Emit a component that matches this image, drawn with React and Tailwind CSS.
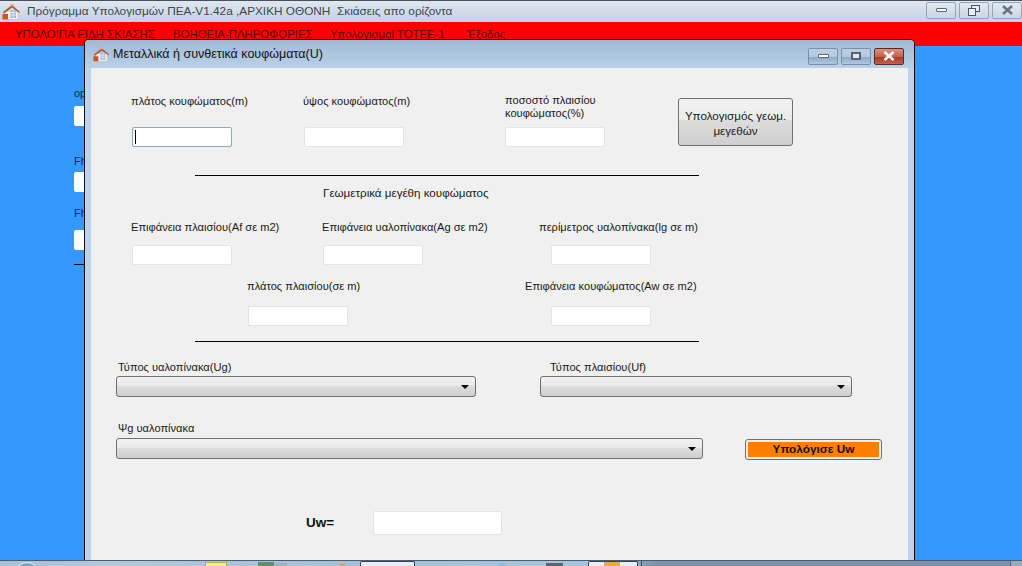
const font = { fontFamily: '"Liberation Sans", Arial, sans-serif' };

function House({ className }) {
  return (
    <svg viewBox="0 0 18 16" className={className}>
      <rect x="3" y="7" width="13" height="8.5" fill="#f6f3ec" stroke="#aeb7c2" strokeWidth="0.5" />
      <path d="M1 8 L10 1 L17.5 7.5 L17.5 9.2 L10 3.4 L2 9.4 Z" fill="#b5532d" />
      <rect x="8.5" y="0.3" width="3" height="2" fill="#e0a27c" />
      <rect x="0.5" y="10" width="5.5" height="5.5" fill="#d2521f" />
      <rect x="8.5" y="6" width="5.5" height="8" fill="#9fb9d3" />
      <path d="M8.5 8.5H14M8.5 11H14M11.2 6V14" stroke="#f4f7fa" strokeWidth="0.7" />
    </svg>
  );
}

function Field({ w = "w-[100px]", h = "h-5", ml = "", active }) {
  return (
    <div className={`${w} ${h} ${ml} shrink-0 rounded-[2px] bg-white border flex items-center ${active ? "border-[#86a9d0]" : "border-[#e2e4e6]"}`}>
      {active && <div className="ml-[2px] w-px h-[14px] bg-black" />}
    </div>
  );
}

function Combo({ w, ml = "" }) {
  return (
    <div className={`${w} ${ml} h-[21px] shrink-0 rounded-[3px] border border-[#707070] flex items-center justify-end pr-[6px] bg-[linear-gradient(#f2f2f2_0%,#ebebeb_45%,#dddddd_46%,#cfcfcf_100%)]`}>
      <div className="w-0 h-0 border-x-[4px] border-x-transparent border-t-[4px] border-t-black" />
    </div>
  );
}

function Label({ children, cell = "" }) {
  return <div className={`${cell} shrink-0 text-[11.1px] leading-[13px] text-[#1a1a1a] whitespace-nowrap`}>{children}</div>;
}

function CaptionBtn({ close, children }) {
  return (
    <div className={`w-[30px] h-[17px] rounded-[2px] border flex items-center justify-center ${close ? "border-[#5a2a25] bg-[linear-gradient(#dd8f80_0%,#c9614f_50%,#a63a28_55%,#c8604c_100%)]" : "border-[#7d8fa5] bg-[linear-gradient(#bccfe3_0%,#b4c9df_50%,#8fabc8_55%,#b0c7de_100%)]"}`}>
      {children}
    </div>
  );
}

function TopBtn({ children }) {
  return <div className="w-[30px] h-[17px] rounded-[2px] border border-[#93a5b8] bg-[linear-gradient(#e2eaf3,#c8d6e6)] flex items-center justify-center">{children}</div>;
}

export default function App() {
  return (
    <div style={font} className="relative w-[1022px] h-[566px] overflow-hidden bg-[#3399ff] flex flex-col">
      {/* main title bar */}
      <div className="h-[22px] shrink-0 border-t border-[#4a4f55] flex items-center bg-[linear-gradient(#dfe7f0,#c3d2e3)]">
        <House className="ml-[2px] w-[18px] h-[16px]" />
        <span className="ml-[7px] text-[11.8px] text-[#3c4650] whitespace-pre">Πρόγραμμα Υπολογισμών ΠΕΑ-V1.42a ,ΑΡΧΙΚΗ ΟΘΟΝΗ  Σκιάσεις απο ορίζοντα</span>
        <div className="ml-auto mb-[3px] flex gap-[3px]">
          <TopBtn><div className="w-[11px] h-[4px] border border-[#5a6571] bg-white rounded-[1px]" /></TopBtn>
          <TopBtn>
            <svg width="12" height="11" viewBox="0 0 12 11" fill="none" stroke="#4a5561"><rect x="3.5" y="0.5" width="8" height="6" fill="#e8eef5" /><rect x="0.5" y="3.5" width="7" height="7" fill="#e8eef5" /></svg>
          </TopBtn>
          <TopBtn>
            <svg width="13" height="10" viewBox="0 0 13 10"><path d="M2 1L11 9M11 1L2 9" stroke="#6b7580" strokeWidth="2.6" /></svg>
          </TopBtn>
        </div>
      </div>
      {/* menu */}
      <div className="h-6 shrink-0 bg-[#ff0000] flex items-start pt-[5px] text-[11.4px] leading-[14px] text-[#5a0000] whitespace-nowrap">
        <span className="ml-[15px] w-[158px]">ΥΠΟΛΟΙΠΑ ΕΙΔΗ ΣΚΙΑΣΗΣ</span>
        <span className="w-[157px]">ΒΟΗΘΕΙΑ-ΠΛΗΡΟΦΟΡΙΕΣ</span>
        <span className="w-[137px]">Υπολογισμοί ΤΟΤΕΕ-1</span>
        <span>Έξοδος</span>
      </div>
      {/* parent form content, mostly covered */}
      <div className="flex-1 pl-[74px] pt-[41px] text-[11px] leading-[13px] text-[#102a50]">
        <div className="h-[19px]">op</div>
        <div className="h-5 w-[60px] bg-white rounded-[2px]" />
        <div className="h-[29px] mt-[17px] pt-[12px]">Fh</div>
        <div className="h-5 w-[60px] bg-white rounded-[2px]" />
        <div className="h-[38px] pt-[15px]">Fh</div>
        <div className="h-5 w-[60px] bg-white rounded-[2px]" />
        <div className="mt-[14px] h-px w-[60px] bg-black" />
      </div>
      {/* taskbar */}
      <div className="h-[6px] shrink-0 border-t border-[#4b5d70] bg-[linear-gradient(90deg,#a9bfd2_0%,#b3c8da_10%,#a5bfd7_35%,#a8c3db_60%,#7d92a8_64%,#7d92a8_100%)] relative">
        <div className="absolute left-[14px] top-[1px] w-[26px] h-[26px] rounded-full border border-[#e8f0f8] bg-[#7ba3c4]" />
        <div className="absolute left-[205px] top-[1px] w-[22px] h-[5px] bg-[#f3e6ae] border border-b-0 border-[#c9a84a]" />
        <div className="absolute left-[258px] top-[1px] w-[16px] h-[5px] bg-[#5f8f70]" />
        <div className="absolute left-[274px] top-[2px] w-[13px] h-[4px] bg-[#9fb0bf]" />
        <div className="absolute left-[340px] top-[3px] w-[5px] h-[3px] bg-[#e0a040]" />
        <div className="absolute left-[360px] top-0 w-[55px] h-[6px] bg-[#e6edf4] border border-b-0 border-[#36465a] rounded-t-[2px]" />
        <div className="absolute left-[497px] top-[2px] w-[9px] h-[4px] rounded-t-full bg-[#7cc4e6]" />
        <div className="absolute left-[546px] top-[2px] w-[17px] h-[4px] bg-[#5a6570]" />
        <div className="absolute left-[588px] top-0 w-[50px] h-[6px] bg-[#e6edf4] border border-b-0 border-[#36465a] rounded-t-[2px]">
          <div className="ml-[15px] w-[16px] h-[4px] bg-[#f0a640]" />
        </div>
        <div className="absolute left-[641px] top-0 w-px h-[6px] bg-[#36465a]" />
        <div className="absolute left-[1010px] top-0 w-[12px] h-[6px] bg-[#9aaabb] border-l border-[#55677a]" />
      </div>
      {/* child window */}
      <div className="absolute left-[84px] top-[39px] w-[831px] h-[521px] border-x border-t border-[#111] rounded-t-[5px] bg-[#bcd3ec] flex flex-col px-[6px] shadow-[inset_0_1px_0_#fff]">
        <div className="h-[28px] shrink-0 -mx-[6px] px-[8px] flex items-center bg-[linear-gradient(#a3bad6,#b9d0e8)] rounded-t-[4px]">
          <House className="w-[16px] h-[15px]" />
          <span className="ml-[4px] text-[12.5px] text-[#111]">Μεταλλικά ή συνθετικά κουφώματα(U)</span>
          <div className="ml-auto mr-[2px] mt-[4px] flex gap-[3px]">
            <CaptionBtn><div className="w-[11px] h-[4px] border border-[#5a6571] bg-white rounded-[1px]" /></CaptionBtn>
            <CaptionBtn><div className="w-[10px] h-[8px] border-2 border-[#56626e] bg-[#dfe8f1]" /></CaptionBtn>
            <CaptionBtn close>
              <svg width="14" height="10" viewBox="0 0 14 10"><path d="M2.5 1L11.5 9M11.5 1L2.5 9" stroke="#fff" strokeWidth="2.6" /></svg>
            </CaptionBtn>
          </div>
        </div>
        <div className="flex-1 bg-[#f0f0f0] flex flex-col pt-[21px]">
          {/* dimensions */}
          <div className="h-[58px] flex">
            <div className="w-[172px] pl-[40px] pt-[6px]">
              <Label>πλάτος κουφώματος(m)</Label>
              <Field ml="ml-px mt-[19px]" active />
            </div>
            <div className="w-[242px] pl-[40px] pt-[6px]">
              <Label>ύψος κουφώματος(m)</Label>
              <Field ml="ml-px mt-[19px]" />
            </div>
            <div className="w-[173px] pt-[6px]">
              <div className="text-[11.1px] leading-[13px] text-[#1a1a1a] h-[33px] -mt-px">ποσοστό πλαισίου<br />κουφώματος(%)</div>
              <Field />
            </div>
            <div className="w-[115px] h-[48px] mt-[9px] pt-px rounded-[3px] border border-[#707070] flex items-center justify-center text-center text-[11.6px] leading-[15px] text-[#1a1a1a] bg-[linear-gradient(#f2f2f2_0%,#ebebeb_45%,#dddddd_46%,#cfcfcf_100%)]">
              Υπολογισμός γεωμ.<br />μεγεθών
            </div>
          </div>
          <div className="ml-[104px] mt-[28px] w-[504px] h-px bg-black" />
          <div className="ml-[232px] mt-[10px] h-[13px] text-[11.6px] leading-[13px] text-[#1a1a1a]">Γεωμετρικά μεγέθη κουφώματος</div>
          {/* geometry */}
          <div className="mt-[22px] h-[13px] flex">
            <Label cell="w-[231px] pl-[40px]">Επιφάνεια πλαισίου(Af σε m2)</Label>
            <Label cell="w-[217px]">Επιφάνεια υαλοπίνακα(Ag σε m2)</Label>
            <Label>περίμετρος υαλοπίνακα(lg σε m)</Label>
          </div>
          <div className="mt-[11px] flex">
            <Field ml="ml-[41px]" />
            <Field ml="ml-[91px]" />
            <Field ml="ml-[128px]" />
          </div>
          <div className="mt-[15px] h-[13px] flex">
            <Label cell="w-[434px] pl-[156px]">πλάτος πλαισίου(σε m)</Label>
            <Label>Επιφάνεια κουφώματος(Aw σε m2)</Label>
          </div>
          <div className="mt-[13px] flex">
            <Field ml="ml-[157px]" />
            <Field ml="ml-[203px]" />
          </div>
          <div className="ml-[104px] mt-[15px] w-[504px] h-px bg-black" />
          {/* types */}
          <div className="mt-[19px] h-[13px] flex">
            <Label cell="w-[459px] pl-[27px]">Τύπος υαλοπίνακα(Ug)</Label>
            <Label>Τύπος πλαισίου(Uf)</Label>
          </div>
          <div className="mt-[2px] flex">
            <Combo w="w-[360px]" ml="ml-[25px]" />
            <Combo w="w-[312px]" ml="ml-[64px]" />
          </div>
          <Label cell="mt-[25px] ml-[27px]">Ψg υαλοπίνακα</Label>
          <div className="mt-[3px] flex">
            <Combo w="w-[587px]" ml="ml-[25px]" />
            <div className="ml-[42px] mt-px w-[137px] h-[21px] rounded-[3px] border border-[#707070] bg-[#f0f0f0] p-[2px]">
              <div className="h-full bg-[#ff8000] flex items-center justify-center text-[11.8px] font-bold text-[#111]">Υπολόγισε Uw</div>
            </div>
          </div>
          {/* result */}
          <div className="mt-[51px] flex items-center">
            <div className="ml-[215px] w-[67px] text-[13.5px] font-bold text-[#111]">Uw=</div>
            <Field w="w-[129px]" h="h-6" />
          </div>
        </div>
      </div>
    </div>
  );
}
